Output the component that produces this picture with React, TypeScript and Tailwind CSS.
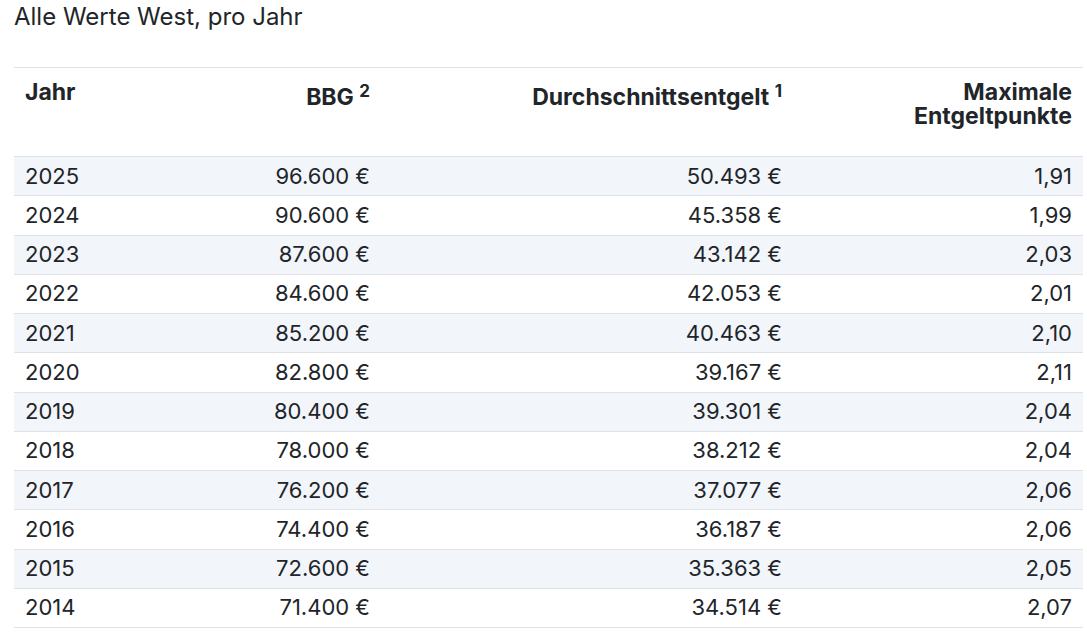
import React from 'react';

const rows: [string, string, string, string][] = [
    ['2025', '96.600 €', '50.493 €', '1,91'],
    ['2024', '90.600 €', '45.358 €', '1,99'],
    ['2023', '87.600 €', '43.142 €', '2,03'],
    ['2022', '84.600 €', '42.053 €', '2,01'],
    ['2021', '85.200 €', '40.463 €', '2,10'],
    ['2020', '82.800 €', '39.167 €', '2,11'],
    ['2019', '80.400 €', '39.301 €', '2,04'],
    ['2018', '78.000 €', '38.212 €', '2,04'],
    ['2017', '76.200 €', '37.077 €', '2,06'],
    ['2016', '74.400 €', '36.187 €', '2,06'],
    ['2015', '72.600 €', '35.363 €', '2,05'],
    ['2014', '71.400 €', '34.514 €', '2,07'],
];

const App: React.FC = () => {
    return (
        <div className="bg-white min-h-screen text-[#212529] font-['Inter',sans-serif]">
            <p className="pl-[14px] pt-[2px] text-[24px] leading-[30px]">Alle Werte West, pro Jahr</p>
            <table className="ml-[14px] mt-[35px] w-[1069px] table-fixed border-collapse">
                <colgroup>
                    <col className="w-[180px]" />
                    <col className="w-[188px]" />
                    <col className="w-[412px]" />
                    <col className="w-[289px]" />
                </colgroup>
                <thead className="font-bold text-[23px] leading-[24px]">
                    <tr className="border-y border-[#dee2e6] h-[89px] align-top">
                        <th className="text-left px-[11px] pt-[12px]">Jahr</th>
                        <th className="text-right px-[12px] pt-[17px]">
                            BBG <sup className="text-[17px]">2</sup>
                        </th>
                        <th className="text-right px-[12px] pt-[17px]">
                            Durchschnittsentgelt <sup className="text-[17px]">1</sup>
                        </th>
                        <th className="text-right px-[11px] pt-[12px]">
                            Maximale
                            <br />
                            Entgeltpunkte
                        </th>
                    </tr>
                </thead>
                <tbody className="text-[22px]">
                    {rows.map((r, i) => (
                        <tr key={r[0]} className={`border-b border-[#dee2e6] h-[39.25px] ${i % 2 === 0 ? 'bg-[#f2f5fa]' : 'bg-white'}`}>
                            <td className="px-[11px] text-left">{r[0]}</td>
                            <td className="px-[12px] text-right">{r[1]}</td>
                            <td className="px-[12px] text-right">{r[2]}</td>
                            <td className="px-[11px] text-right">{r[3]}</td>
                        </tr>
                    ))}
                </tbody>
            </table>
        </div>
    );
};

export default App;
